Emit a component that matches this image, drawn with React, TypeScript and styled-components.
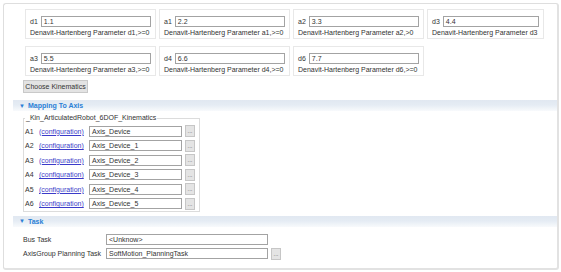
import React from "react";
import styled, { createGlobalStyle } from "styled-components";

const GlobalStyle = createGlobalStyle`
  html, body { margin: 0; padding: 0; background: #ffffff; }
  body { font-family: "Liberation Sans", Arial, sans-serif; color: #333333; font-size: 7px; }
  * { box-sizing: border-box; }
`;

const Frame = styled.div`
  margin: 3px 0 0 3px;
  width: 556px;
  height: 267px;
  border: 1px solid #dedede;
  border-right: 2px solid #e2e2e2;
  border-bottom: 2px solid #e2e2e2;
  border-radius: 3px;
  background: #ffffff;
  padding-top: 5px;
`;

const Params = styled.div`
  padding-left: 21px;
  display: flex;
  flex-direction: column;
  gap: 7px;
`;

const CardRow = styled.div`
  display: flex;
  gap: 3px;
`;

const Card = styled.div<{ $w: number }>`
  width: ${(p) => p.$w}px;
  height: 30px;
  border: 1px solid #e8e8e8;
  padding: 6px 4px 0 4px;
  display: flex;
  flex-direction: column;
  gap: 2px;
`;

const CardTop = styled.div`
  display: flex;
  align-items: center;
  gap: 3px;
`;

const SmallLabel = styled.span`
  font-size: 7px;
  line-height: 11px;
  color: #333;
  white-space: nowrap;
`;

const Desc = styled.div`
  font-size: 7px;
  line-height: 8px;
  color: #333;
  white-space: nowrap;
`;

const Field = styled.div<{ $w?: number }>`
  height: 11px;
  ${(p) => (p.$w ? `width: ${p.$w}px; flex: none;` : `flex: 1; min-width: 0;`)}
  border: 1px solid #a3a3a3;
  background: #fff;
  font-size: 7px;
  line-height: 9px;
  color: #333;
  padding: 0 2px;
  white-space: nowrap;
`;

const GreyButton = styled.button`
  height: 13px;
  width: 65px;
  margin: 4px 0 0 19px;
  padding: 0;
  border: 1px solid #c9c9c9;
  background: #e3e3e3;
  font-family: "Liberation Sans", Arial, sans-serif;
  font-size: 7px;
  color: #333;
  display: block;
`;

const Header = styled.div<{ $top: number }>`
  margin: ${(p) => p.$top}px 0 0 9px;
  height: 11px;
  background: linear-gradient(to bottom, #e1e8f1 0%, #e5ecf4 45%, #f8fafc 100%);
  display: flex;
  align-items: center;
  padding-left: 6px;
  gap: 3px;
  color: #2a7fd6;
  font-weight: bold;
  font-size: 7px;
`;

const Caret = styled.span`
  font-size: 6px;
  line-height: 6px;
  color: #2a7fd6;
`;

const Group = styled.fieldset`
  margin: 3px 0 0 19px;
  width: 174px;
  border: 1px solid #dcdcdc;
  padding: 3px 4px 2px 1px;
  display: flex;
  flex-direction: column;
  gap: 3.6px;
`;

const Legend = styled.legend`
  font-size: 7px;
  line-height: 8px;
  padding: 0 1px;
  margin-left: 0;
  color: #333;
  white-space: nowrap;
`;

const AxisRow = styled.div`
  display: grid;
  grid-template-columns: 11px 47px 93px 10px;
  column-gap: 3px;
  align-items: center;
  height: 11px;
`;

const Link = styled.span`
  color: #3b3bc9;
  text-decoration: underline;
  font-size: 7px;
  white-space: nowrap;
`;

const DotButton = styled.button`
  width: 10px;
  height: 12px;
  padding: 0;
  margin: 0;
  border: 1px solid #c6c6c6;
  background: #e4e4e4;
  font-size: 6px;
  line-height: 8px;
  color: #555;
  font-family: "Liberation Sans", Arial, sans-serif;
`;

const TaskBody = styled.div`
  margin: 7px 0 0 19px;
  display: flex;
  flex-direction: column;
  gap: 3px;
`;

const TaskRow = styled.div`
  display: grid;
  grid-template-columns: 80px 162px 10px;
  column-gap: 3px;
  align-items: center;
  height: 11px;
`;

const params1 = [
  { l: "d1", v: "1.1", d: "Denavit-Hartenberg Parameter d1,>=0", w: 131 },
  { l: "a1", v: "2.2", d: "Denavit-Hartenberg Parameter a1,>=0", w: 131 },
  { l: "a2", v: "3.3", d: "Denavit-Hartenberg Parameter a2,>0", w: 131 },
  { l: "d3", v: "4.4", d: "Denavit-Hartenberg Parameter d3", w: 117 },
];
const params2 = [
  { l: "a3", v: "5.5", d: "Denavit-Hartenberg Parameter a3,>=0", w: 131 },
  { l: "d4", v: "6.6", d: "Denavit-Hartenberg Parameter d4,>=0", w: 131 },
  { l: "d6", v: "7.7", d: "Denavit-Hartenberg Parameter d6,>=0", w: 131 },
];

const axes = ["Axis_Device", "Axis_Device_1", "Axis_Device_2", "Axis_Device_3", "Axis_Device_4", "Axis_Device_5"];

type P = { l: string; v: string; d: string; w: number };

const ParamCard = ({ p }: { p: P }) => (
  <Card $w={p.w}>
    <CardTop>
      <SmallLabel>{p.l}</SmallLabel>
      <Field>{p.v}</Field>
    </CardTop>
    <Desc>{p.d}</Desc>
  </Card>
);

export default function App() {
  return (
    <>
      <GlobalStyle />
      <Frame>
        <Params>
          <CardRow>
            {params1.map((p) => (
              <ParamCard key={p.l} p={p} />
            ))}
          </CardRow>
          <CardRow>
            {params2.map((p) => (
              <ParamCard key={p.l} p={p} />
            ))}
          </CardRow>
        </Params>
        <GreyButton>Choose Kinematics</GreyButton>
        <Header $top={7}>
          <Caret>▼</Caret>
          <span>Mapping To Axis</span>
        </Header>
        <Group>
          <Legend>_Kin_ArticulatedRobot_6DOF_Kinematics</Legend>
          {axes.map((a, i) => (
            <AxisRow key={a}>
              <SmallLabel>A{i + 1}</SmallLabel>
              <Link>(configuration)</Link>
              <Field $w={93}>{a}</Field>
              <DotButton>...</DotButton>
            </AxisRow>
          ))}
        </Group>
        <Header $top={4}>
          <Caret>▼</Caret>
          <span>Task</span>
        </Header>
        <TaskBody>
          <TaskRow>
            <SmallLabel>Bus Task</SmallLabel>
            <Field $w={162}>{"<Unknow>"}</Field>
          </TaskRow>
          <TaskRow>
            <SmallLabel>AxisGroup Planning Task</SmallLabel>
            <Field $w={162}>SoftMotion_PlanningTask</Field>
            <DotButton>...</DotButton>
          </TaskRow>
        </TaskBody>
      </Frame>
    </>
  );
}
